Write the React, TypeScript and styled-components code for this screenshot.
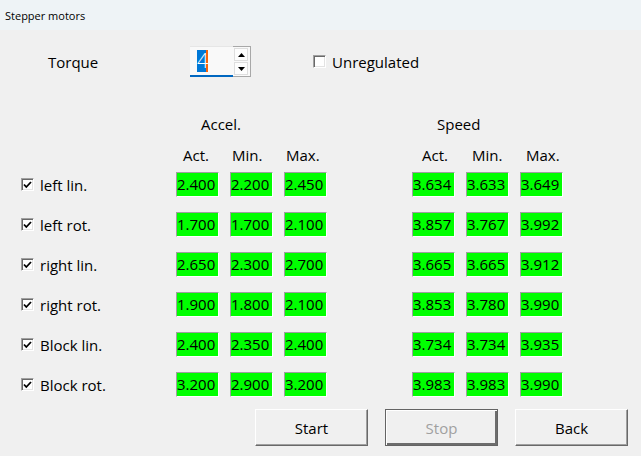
import React from "react";
import styled, { createGlobalStyle } from "styled-components";

const GlobalStyle = createGlobalStyle`
  html, body {
    margin: 0;
    padding: 0;
    background: #f0f0f0;
  }
`;

const StyledWindow = styled.div`
  width: 641px;
  height: 456px;
  overflow: hidden;
  background: #f0f0f0;
  font-family: "Open Sans", "Noto Sans", sans-serif;
  color: #000;
  display: flex;
  flex-direction: column;
`;

const StyledTitleBar = styled.div`
  height: 30px;
  flex-shrink: 0;
  background: #eef3f6;
  display: flex;
  align-items: center;
  padding-left: 5px;
  font-size: 11px;
`;

const StyledTopRow = styled.div`
  margin-top: 16px;
  height: 31px;
  display: flex;
  align-items: center;
  padding-left: 48px;
  font-size: 15px;
`;

const StyledTorqueLabel = styled.span`
  width: 142px;
`;

const StyledSpinBox = styled.div`
  width: 61px;
  height: 31px;
  box-sizing: border-box;
  display: flex;
  background: #f9f9f9;
  border-top: 1px solid #e6e6e6;
`;

const StyledSpinText = styled.div`
  width: 43px;
  box-sizing: border-box;
  border-bottom: 2px solid #0067c0;
  padding-left: 7px;
  display: flex;
  align-items: center;
`;

const StyledSelection = styled.span`
  display: inline-block;
  width: 9px;
  height: 22px;
  line-height: 22px;
  background: #0078d7;
  color: #fff;
  font-size: 20px;
  font-weight: 300;
  text-align: center;
  border-right: 2px solid #f7630c;
`;

const StyledSpinButtons = styled.div`
  width: 18px;
  box-sizing: border-box;
  border: 1px solid #a8a8a8;
  border-left: none;
  margin-top: -1px;
  padding: 1px 2px 1px 1px;
  display: flex;
  flex-direction: column;
  gap: 1px;
`;

const StyledSpinArrow = styled.div`
  flex: 1;
  background: #fdfdfd;
  border: 1px solid #dedede;
  display: flex;
  align-items: center;
  justify-content: center;
`;

const StyledCheckLabel = styled.label<{ $offset?: number }>`
  display: flex;
  align-items: center;
  gap: 6px;
  margin-left: ${(p) => p.$offset ?? 0}px;
  font-size: 15px;
`;

const StyledCheckBox = styled.span`
  width: 13px;
  height: 13px;
  box-sizing: border-box;
  background: #fff;
  border: 1px solid;
  border-color: #a0a0a0 #fff #fff #a0a0a0;
  box-shadow: inset 1px 1px #696969, inset -1px -1px #e3e3e3;
  display: flex;
  align-items: center;
  justify-content: center;
`;

const StyledTable = styled.div`
  padding-left: 21px;
  font-size: 15px;
`;

const StyledRow = styled.div<{ $top: number; $height: number }>`
  display: flex;
  align-items: center;
  margin-top: ${(p) => p.$top}px;
  height: ${(p) => p.$height}px;
`;

const StyledLabelCell = styled.div`
  width: 155px;
`;

const StyledGroup = styled.div`
  display: grid;
  grid-template-columns: repeat(3, 43px);
  column-gap: 11px;
  & + & {
    margin-left: 85px;
  }
`;

const StyledGroupTitle = styled.div`
  width: 151px;
  padding-left: 25px;
  box-sizing: border-box;
  & + & {
    margin-left: 85px;
  }
`;

const StyledColHeader = styled.div<{ $indent: number }>`
  padding-left: ${(p) => p.$indent}px;
  white-space: nowrap;
`;

const StyledValue = styled.div`
  height: 25px;
  box-sizing: border-box;
  background: #00ff00;
  border: 1px solid;
  border-color: #a0a0a0 #fff #fff #a0a0a0;
  line-height: 23px;
  overflow: hidden;
  white-space: nowrap;
`;

const StyledButtonRow = styled.div`
  margin-top: 12px;
  padding-left: 255px;
  display: flex;
  gap: 17px;
`;

const StyledButton = styled.button<{ $default?: boolean }>`
  width: 113px;
  height: 37px;
  box-sizing: border-box;
  background: #f0f0f0;
  font-family: "Open Sans", "Noto Sans", sans-serif;
  font-size: 15px;
  color: ${(p) => (p.disabled ? "#a0a0a0" : "#000")};
  padding: 0;
  border: 1px solid;
  border-color: ${(p) =>
    p.$default ? "#646464" : "#fff #696969 #696969 #fff"};
  box-shadow: ${(p) =>
    p.$default
      ? "inset 1px 1px #fff, inset -2px -2px #6d6d6d"
      : "inset -1px -1px #a0a0a0"};
`;

const Check = () => (
  <svg width="9" height="8" viewBox="0 0 9 8">
    <path d="M1 3.5 L3.3 6 L8 1" fill="none" stroke="#000" strokeWidth="1.8" />
  </svg>
);

const Arrow = ({ up }: { up?: boolean }) => (
  <svg width="7" height="4" viewBox="0 0 7 4">
    <path d={up ? "M0 4 L3.5 0 L7 4 Z" : "M0 0 L3.5 4 L7 0 Z"} fill="#000" />
  </svg>
);

const rows = [
  { name: "left lin.", accel: ["2.400", "2.200", "2.450"], speed: ["3.634", "3.633", "3.649"] },
  { name: "left rot.", accel: ["1.700", "1.700", "2.100"], speed: ["3.857", "3.767", "3.992"] },
  { name: "right lin.", accel: ["2.650", "2.300", "2.700"], speed: ["3.665", "3.665", "3.912"] },
  { name: "right rot.", accel: ["1.900", "1.800", "2.100"], speed: ["3.853", "3.780", "3.990"] },
  { name: "Block lin.", accel: ["2.400", "2.350", "2.400"], speed: ["3.734", "3.734", "3.935"] },
  { name: "Block rot.", accel: ["3.200", "2.900", "3.200"], speed: ["3.983", "3.983", "3.990"] },
];

function App() {
  return (
    <>
      <GlobalStyle />
      <StyledWindow>
        <StyledTitleBar>Stepper motors</StyledTitleBar>
        <StyledTopRow>
          <StyledTorqueLabel>Torque</StyledTorqueLabel>
          <StyledSpinBox>
            <StyledSpinText>
              <StyledSelection>4</StyledSelection>
            </StyledSpinText>
            <StyledSpinButtons>
              <StyledSpinArrow>
                <Arrow up />
              </StyledSpinArrow>
              <StyledSpinArrow>
                <Arrow />
              </StyledSpinArrow>
            </StyledSpinButtons>
          </StyledSpinBox>
          <StyledCheckLabel $offset={62}>
            <StyledCheckBox />
            Unregulated
          </StyledCheckLabel>
        </StyledTopRow>
        <StyledTable>
          <StyledRow $top={37} $height={20}>
            <StyledLabelCell />
            <StyledGroupTitle>Accel.</StyledGroupTitle>
            <StyledGroupTitle>Speed</StyledGroupTitle>
          </StyledRow>
          <StyledRow $top={11} $height={20}>
            <StyledLabelCell />
            <StyledGroup>
              <StyledColHeader $indent={7}>Act.</StyledColHeader>
              <StyledColHeader $indent={2}>Min.</StyledColHeader>
              <StyledColHeader $indent={2}>Max.</StyledColHeader>
            </StyledGroup>
            <StyledGroup>
              <StyledColHeader $indent={10}>Act.</StyledColHeader>
              <StyledColHeader $indent={6}>Min.</StyledColHeader>
              <StyledColHeader $indent={6}>Max.</StyledColHeader>
            </StyledGroup>
          </StyledRow>
          {rows.map((r, i) => (
            <StyledRow key={r.name} $top={i === 0 ? 7 : 15} $height={25}>
              <StyledLabelCell>
                <StyledCheckLabel>
                  <StyledCheckBox>
                    <Check />
                  </StyledCheckBox>
                  {r.name}
                </StyledCheckLabel>
              </StyledLabelCell>
              <StyledGroup>
                {r.accel.map((v, j) => (
                  <StyledValue key={j}>{v}</StyledValue>
                ))}
              </StyledGroup>
              <StyledGroup>
                {r.speed.map((v, j) => (
                  <StyledValue key={j}>{v}</StyledValue>
                ))}
              </StyledGroup>
            </StyledRow>
          ))}
        </StyledTable>
        <StyledButtonRow>
          <StyledButton>Start</StyledButton>
          <StyledButton $default disabled>
            Stop
          </StyledButton>
          <StyledButton>Back</StyledButton>
        </StyledButtonRow>
      </StyledWindow>
    </>
  );
}

export default App;
